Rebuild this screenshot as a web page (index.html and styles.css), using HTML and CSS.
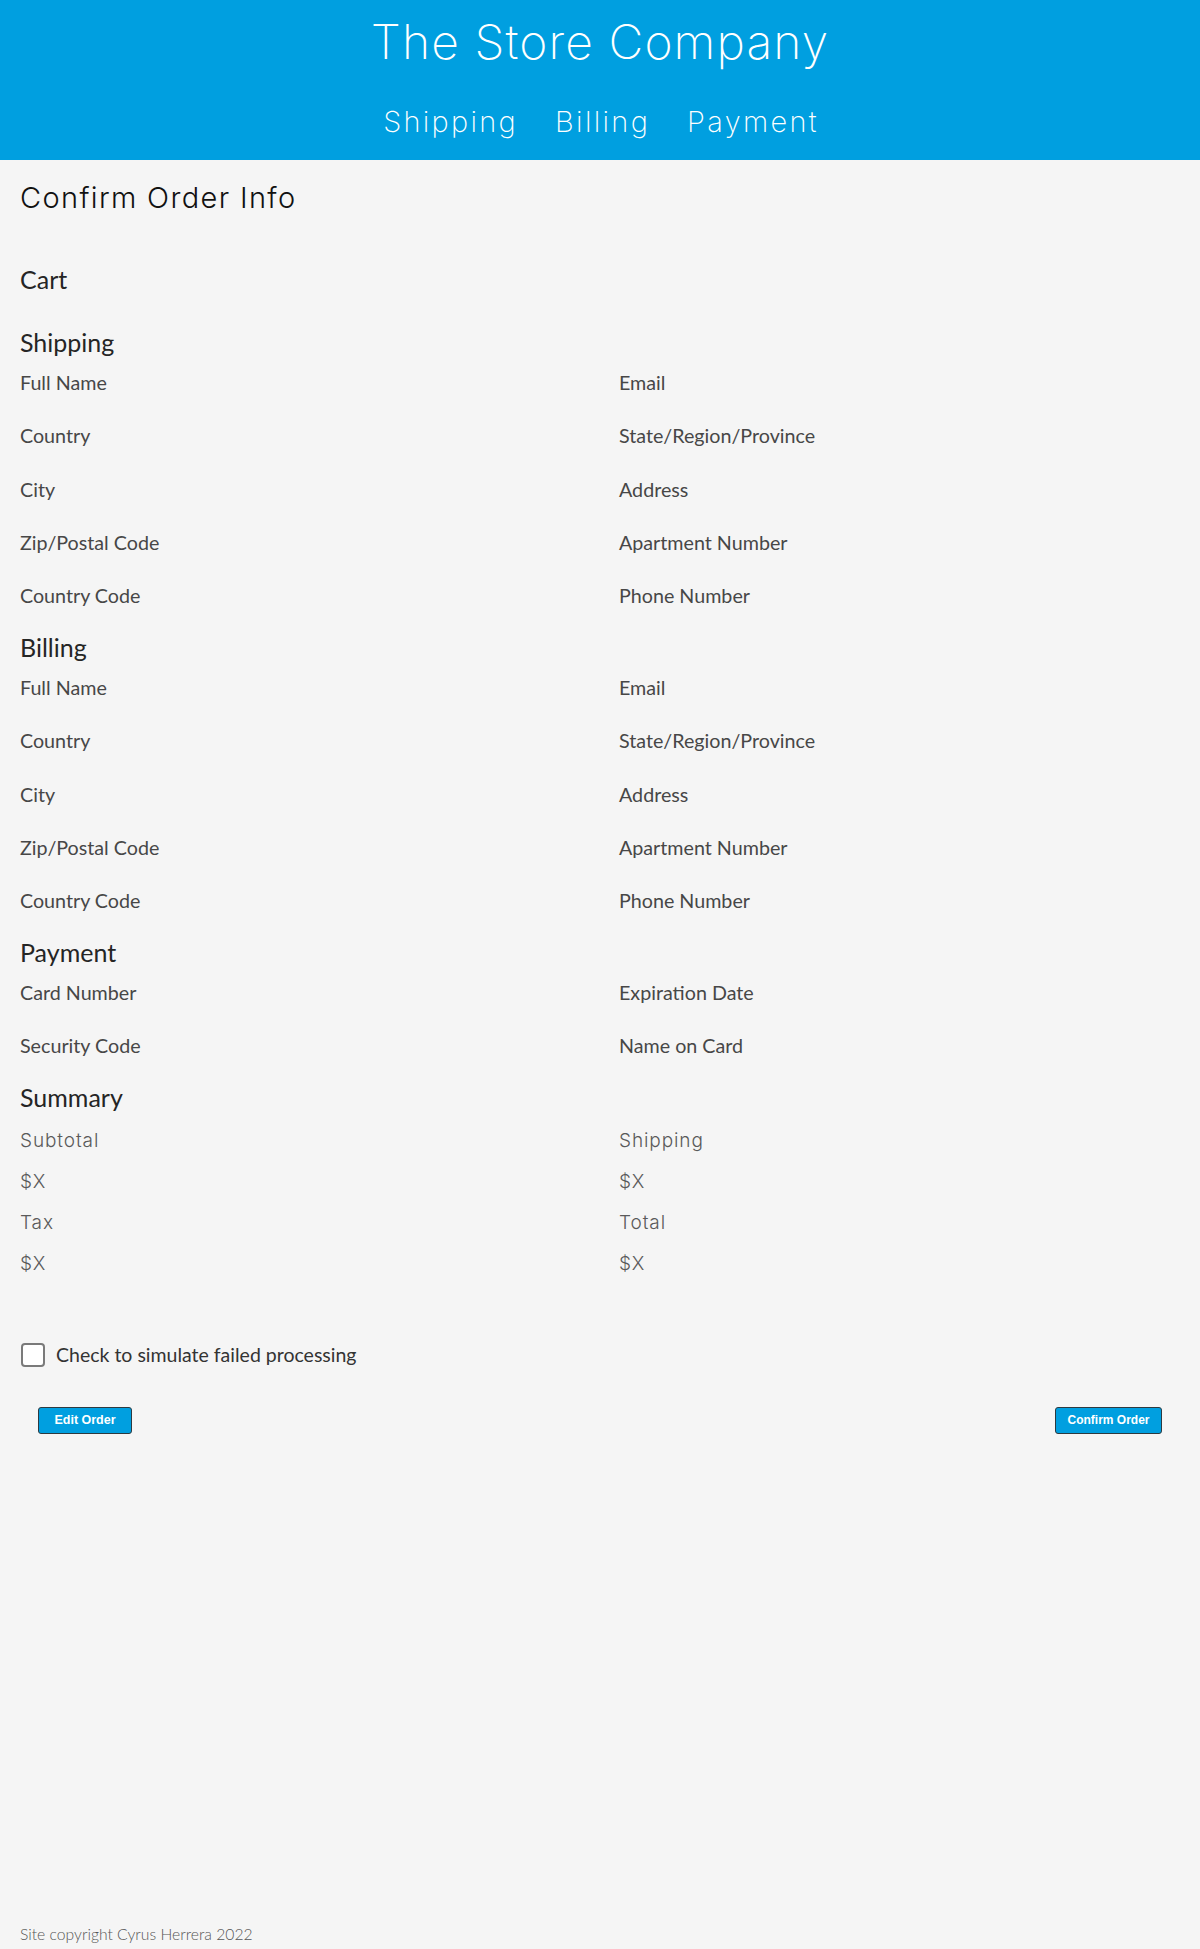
FILE: index.html
```html
<!DOCTYPE html>
<html lang="en">
<head>
<meta charset="utf-8">
<title>The Store Company - Confirm Order</title>
<link rel="stylesheet" href="styles.css">
</head>
<body>
<div class="page">
  <header class="site-header">
    <h1 class="brand">The Store Company</h1>
    <nav class="nav">
      <a href="#" class="nav-link">Shipping</a>
      <a href="#" class="nav-link">Billing</a>
      <a href="#" class="nav-link">Payment</a>
    </nav>
  </header>

  <main class="main">
    <h2 class="page-title">Confirm Order Info</h2>

    <section class="section cart">
      <h3 class="section-title">Cart</h3>
    </section>

    <section class="section">
      <h3 class="section-title">Shipping</h3>
      <div class="fields">
        <div class="field">Full Name</div>
        <div class="field">Email</div>
        <div class="field">Country</div>
        <div class="field">State/Region/Province</div>
        <div class="field">City</div>
        <div class="field">Address</div>
        <div class="field">Zip/Postal Code</div>
        <div class="field">Apartment Number</div>
        <div class="field">Country Code</div>
        <div class="field">Phone Number</div>
      </div>
    </section>

    <section class="section">
      <h3 class="section-title">Billing</h3>
      <div class="fields">
        <div class="field">Full Name</div>
        <div class="field">Email</div>
        <div class="field">Country</div>
        <div class="field">State/Region/Province</div>
        <div class="field">City</div>
        <div class="field">Address</div>
        <div class="field">Zip/Postal Code</div>
        <div class="field">Apartment Number</div>
        <div class="field">Country Code</div>
        <div class="field">Phone Number</div>
      </div>
    </section>

    <section class="section">
      <h3 class="section-title">Payment</h3>
      <div class="fields">
        <div class="field">Card Number</div>
        <div class="field">Expiration Date</div>
        <div class="field">Security Code</div>
        <div class="field">Name on Card</div>
      </div>
    </section>

    <section class="section">
      <h3 class="section-title">Summary</h3>
      <div class="fields summary">
        <div class="field light">Subtotal</div>
        <div class="field light">Shipping</div>
        <div class="field light">$X</div>
        <div class="field light">$X</div>
        <div class="field light">Tax</div>
        <div class="field light">Total</div>
        <div class="field light">$X</div>
        <div class="field light">$X</div>
      </div>
    </section>

    <label class="check-row">
      <input type="checkbox" class="check-box">
      <span class="check-label">Check to simulate failed processing</span>
    </label>

    <div class="actions">
      <button type="button" class="btn btn-edit">Edit Order</button>
      <button type="button" class="btn btn-confirm">Confirm Order</button>
    </div>
  </main>

  <footer class="site-footer">Site copyright Cyrus Herrera 2022</footer>
</div>
</body>
</html>
```

FILE: styles.css
```css
* { box-sizing: border-box; }

html, body {
  margin: 0;
  padding: 0;
}

body {
  background: #f5f5f5;
  font-family: Lato, "Open Sans", Arial, sans-serif;
  color: #222;
}

.page {
  min-height: 100vh;
  display: flex;
  flex-direction: column;
}

.site-header {
  background: #009fe0;
  height: 160px;
  padding-top: 13px;
  text-align: center;
  color: #fff;
}

.brand {
  margin: 0;
  font-family: Inter, "Open Sans", sans-serif;
  font-weight: 200;
  font-size: 48px;
  line-height: 58px;
  letter-spacing: 1.1px;
}

.nav {
  margin-top: 33px;
  display: flex;
  justify-content: center;
  gap: 37px;
  padding-left: 2px;
}

.nav-link {
  color: #fff;
  text-decoration: none;
  font-family: Inter, "Open Sans", sans-serif;
  font-weight: 200;
  font-size: 29px;
  line-height: 36px;
  letter-spacing: 2.3px;
}

.main {
  flex: 1;
  padding: 0 20px;
}

.page-title {
  margin: 20px 0 0;
  font-family: Inter, "Open Sans", sans-serif;
  font-weight: 300;
  font-size: 29px;
  line-height: 36px;
  letter-spacing: 1.35px;
  color: #111;
}

.section-title {
  margin: 0;
  font-weight: 400;
  font-size: 25px;
  line-height: 28px;
  color: #252525;
}

.section { margin-top: 25px; }

.cart {
  margin-top: 49px;
  padding-bottom: 10px;
}

.fields {
  margin-top: 15px;
  display: grid;
  grid-template-columns: 1fr 1fr;
  column-gap: 38px;
  row-gap: 29.25px;
}

.fields.summary {
  margin-top: 18px;
  row-gap: 16.9px;
}

.field {
  font-size: 19.7px;
  line-height: 24px;
  color: #474747;
}

.field.light {
  font-family: Inter, "Open Sans", sans-serif;
  font-weight: 300;
  font-size: 19px;
  letter-spacing: 0.9px;
  color: #5a5a5a;
}

.check-row {
  margin-top: 67px;
  display: flex;
  align-items: center;
  gap: 11px;
  cursor: pointer;
}

.check-box {
  appearance: none;
  -webkit-appearance: none;
  margin: 0 0 0 1px;
  width: 24px;
  height: 24px;
  border: 2px solid #7a7a7a;
  border-radius: 4px;
  background: #fff;
}

.check-label {
  font-size: 19.5px;
  line-height: 24px;
  color: #333;
}

.actions {
  margin-top: 40px;
  padding: 0 18px;
  display: flex;
  justify-content: space-between;
}

.btn {
  height: 27px;
  padding: 0;
  background: #009fe0;
  color: #fff;
  border: 1px solid #2d3a40;
  border-radius: 3px;
  font-family: "Liberation Sans", Arial, sans-serif;
  font-weight: 700;
  font-size: 12.5px;
  cursor: pointer;
}

.btn-edit { width: 94px; }
.btn-confirm { width: 107px; font-size: 12px; }

.site-footer {
  padding: 0 20px 5px;
  font-size: 15.7px;
  line-height: 19px;
  font-weight: 300;
  color: #555;
}
```
